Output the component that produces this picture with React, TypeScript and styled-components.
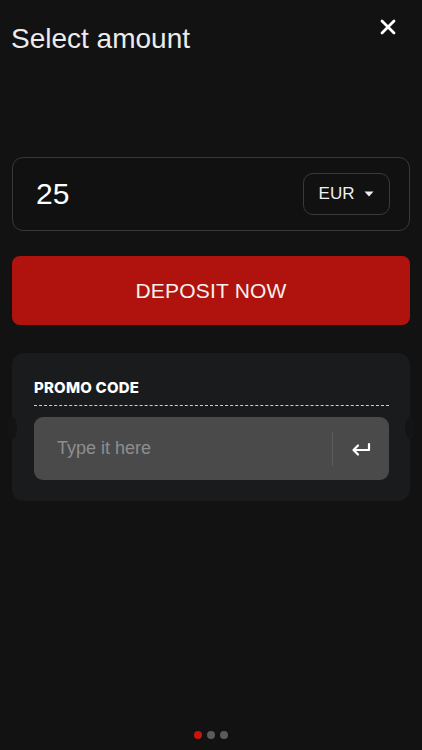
import styled, { createGlobalStyle } from 'styled-components';

const GlobalStyle = createGlobalStyle`
  html, body {
    margin: 0;
    padding: 0;
    background: #121213;
  }
  * {
    box-sizing: border-box;
  }
`;

function App() {
  return (
    <Page>
      <GlobalStyle />
      <Header>
        <Title>Select amount</Title>
        <CloseButton aria-label='close'>
          <svg width='16' height='16' viewBox='0 0 16 16'>
            <path d='M2 2L14 14M14 2L2 14' stroke='#fff' strokeWidth='2.8' strokeLinecap='round' />
          </svg>
        </CloseButton>
      </Header>

      <AmountBox>
        <Amount>25</Amount>
        <CurrencyButton>
          EUR
          <svg width='10' height='6' viewBox='0 0 10 6'>
            <path d='M0.5 0.5H9.5L5 5.5Z' fill='#eee' />
          </svg>
        </CurrencyButton>
      </AmountBox>

      <DepositButton>DEPOSIT NOW</DepositButton>

      <PromoCard>
        <PromoLabel>PROMO CODE</PromoLabel>
        <PromoInput>
          <Placeholder>Type it here</Placeholder>
          <Divider />
          <EnterIcon>
            <svg width='22' height='16' viewBox='0 0 22 16'>
              <path
                d='M19 3V9H4M8 4.5L3.5 9L8 13.5'
                stroke='#fff'
                strokeWidth='2.2'
                fill='none'
                strokeLinecap='round'
                strokeLinejoin='round'
              />
            </svg>
          </EnterIcon>
        </PromoInput>
      </PromoCard>

      <Dots>
        <Dot $active />
        <Dot />
        <Dot />
      </Dots>
    </Page>
  );
}

export default App;

const Page = styled.div`
  width: 422px;
  height: 750px;
  background: #121213;
  border-radius: 0 14px 0 0;
  padding: 0 12px;
  display: flex;
  flex-direction: column;
  font-family: 'Liberation Sans', Arial, sans-serif;
  color: #ececec;
`;

const Header = styled.div`
  display: flex;
  justify-content: space-between;
  align-items: flex-start;
  height: 157px;
`;

const Title = styled.h1`
  margin: 24px 0 0 -1px;
  font-size: 28px;
  font-weight: 400;
  line-height: 30px;
  color: #ececec;
`;

const CloseButton = styled.button`
  margin: 19px 14px 0 0;
  padding: 0;
  border: none;
  background: none;
  width: 16px;
  height: 16px;
  display: flex;
`;

const AmountBox = styled.div`
  height: 74px;
  border: 1px solid #38383a;
  border-radius: 11px;
  background: #111112;
  display: flex;
  align-items: center;
  justify-content: space-between;
  padding: 0 19px 0 23px;
`;

const Amount = styled.span`
  font-size: 30px;
  color: #fff;
`;

const CurrencyButton = styled.div`
  width: 87px;
  height: 42px;
  border: 1px solid #3a3a3c;
  border-radius: 10px;
  display: flex;
  align-items: center;
  justify-content: center;
  gap: 10px;
  font-size: 17px;
  color: #f0f0f0;
`;

const DepositButton = styled.button`
  margin-top: 25px;
  height: 69px;
  border: none;
  border-radius: 8px;
  background: #b0130d;
  color: #f6f0ee;
  font-family: 'Liberation Sans', Arial, sans-serif;
  font-size: 21px;
  letter-spacing: 0.2px;
`;

const PromoCard = styled.div`
  position: relative;
  margin-top: 28px;
  height: 148px;
  background: #1a1b1d;
  border-radius: 12px;
  padding: 26px 21px 0 22px;

  &::before,
  &::after {
    content: '';
    position: absolute;
    top: 64px;
    width: 10px;
    height: 22px;
    background: #141415;
    border-radius: 50%;
  }
  &::before {
    left: -5px;
  }
  &::after {
    right: -5px;
  }
`;

const PromoLabel = styled.div`
  font-family: Inter, 'Noto Sans', sans-serif;
  font-weight: 800;
  font-size: 15px;
  line-height: 18px;
  letter-spacing: 0.2px;
  color: #fff;
  padding-bottom: 8px;
  border-bottom: 1px dashed #cfcfcf;
`;

const PromoInput = styled.div`
  margin-top: 11px;
  height: 63px;
  background: #4a4a4b;
  border-radius: 9px;
  display: flex;
  align-items: center;
  padding-left: 23px;
`;

const Placeholder = styled.span`
  flex: 1;
  font-size: 18px;
  color: #8e8e8f;
`;

const Divider = styled.div`
  width: 1px;
  height: 34px;
  background: #5c5c5d;
`;

const EnterIcon = styled.div`
  width: 56px;
  display: flex;
  justify-content: center;
  align-items: center;
`;

const Dots = styled.div`
  margin-top: auto;
  margin-bottom: 11px;
  display: flex;
  justify-content: center;
  gap: 5px;
`;

const Dot = styled.span<{ $active?: boolean }>`
  width: 8px;
  height: 8px;
  border-radius: 50%;
  background: ${(p) => (p.$active ? '#c8140d' : '#5b5b5c')};
`;
